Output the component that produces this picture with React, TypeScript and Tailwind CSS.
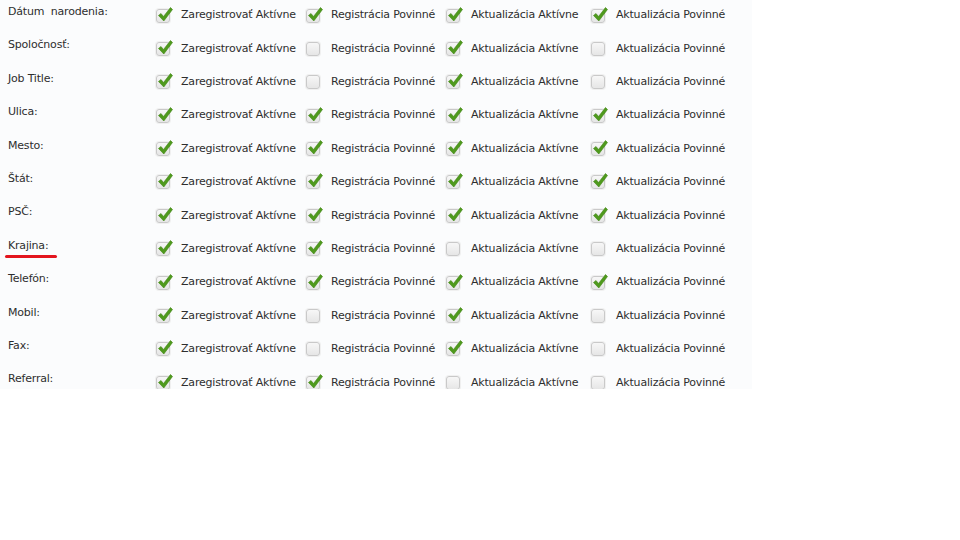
import React from 'react';

type Row = { label: string; flags: [boolean, boolean, boolean, boolean]; mark?: boolean };

const rows: Row[] = [
  { label: 'Dátum  narodenia:', flags: [true, true, true, true] },
  { label: 'Spoločnosť:', flags: [true, false, true, false] },
  { label: 'Job Title:', flags: [true, false, true, false] },
  { label: 'Ulica:', flags: [true, true, true, true] },
  { label: 'Mesto:', flags: [true, true, true, true] },
  { label: 'Štát:', flags: [true, true, true, true] },
  { label: 'PSČ:', flags: [true, true, true, true] },
  { label: 'Krajina:', flags: [true, true, false, false], mark: true },
  { label: 'Telefón:', flags: [true, true, true, true] },
  { label: 'Mobil:', flags: [true, false, true, false] },
  { label: 'Fax:', flags: [true, false, true, false] },
  { label: 'Referral:', flags: [true, true, false, false] },
];

const captions = ['Zaregistrovať Aktívne', 'Registrácia Povinné', 'Aktualizácia Aktívne', 'Aktualizácia Povinné'];
const widths = ['w-[150px]', 'w-[140px]', 'w-[145px]', 'w-[160px]'];

const Box = ({ checked }: { checked: boolean }) => (
  <span className="relative inline-block w-[14px] h-[14px] shrink-0 rounded-[3px] border border-[#c9c9c9] bg-gradient-to-b from-[#f7f7f7] to-[#e6e6e6] shadow-[0_0_0_1px_#f0f0f0]">
    {checked && (
      <svg className="absolute left-[0px] top-[-4px]" width="17" height="17" viewBox="0 0 17 17">
        <path d="M1.5 9.5 L4 7.5 L6.5 10.5 L13.5 1.5 L15.5 3.5 L6.8 15 Z" fill="#4f9a1d" stroke="#3f8414" strokeWidth="0.6" strokeLinejoin="round" />
      </svg>
    )}
  </span>
);

export default function App() {
  return (
    <div className="w-[960px] h-[540px] bg-white" style={{ fontFamily: 'Tahoma, "DejaVu Sans", Verdana, sans-serif' }}>
      <div className="w-[752px] h-[389px] overflow-hidden bg-[#fbfcfd]">
        {rows.map((r) => (
          <div key={r.label} className="flex h-[33.4px]">
            <div className="relative w-[155px] pl-[8px] pt-[4px] text-[11px] text-[#2e2e2e] tracking-[-0.2px] whitespace-pre">
              {r.label}
              {r.mark && <span className="absolute left-[5px] top-[21px] w-[52px] h-[3px] rounded-full bg-[#e3151e]" />}
            </div>
            {r.flags.map((f, i) => (
              <div key={i} className={`${widths[i]} flex items-center gap-[11px] h-[31px] pl-[1px] text-[11px] text-[#2e2e2e] tracking-[-0.2px]`}>
                <Box checked={f} />
                <span className="whitespace-nowrap">{captions[i]}</span>
              </div>
            ))}
          </div>
        ))}
      </div>
    </div>
  );
}
